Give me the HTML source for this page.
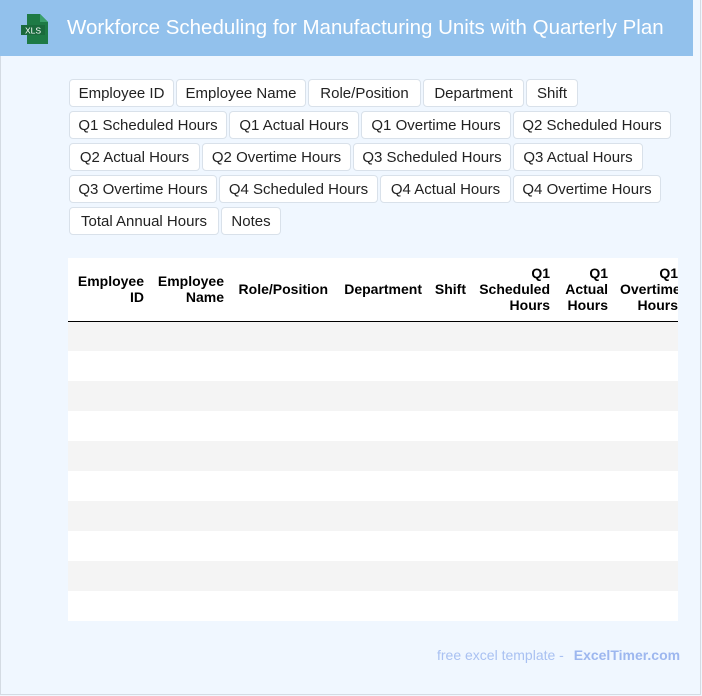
<!DOCTYPE html>
<html><head><meta charset="utf-8"><style>
*{box-sizing:border-box;margin:0;padding:0}
body{width:702px;height:696px;background:#f0f7ff;font-family:"Liberation Sans",Arial,sans-serif;position:relative;overflow:hidden}
.frame{position:absolute;left:0;top:0;width:701px;height:695px;border:1px solid #d4dbe3;border-top:none}
.hdr{position:absolute;left:0;top:0;width:693px;height:56px;background:#92c1ec}
.hdr h1{position:absolute;left:67px;top:16px;font-size:20.5px;font-weight:normal;color:#fff;white-space:nowrap}
.tags{position:absolute;left:69px;top:79px;width:620px}
.row{display:flex;gap:2px;margin-bottom:4px}
.tag{height:28px;background:#fff;border:1px solid #d9e1ea;border-radius:4px;font-size:15px;color:#222;display:flex;align-items:center;justify-content:center;white-space:nowrap;overflow:hidden}
th{font-size:14px;font-weight:bold;text-align:right;vertical-align:middle;padding:0 6px;height:63px;border-bottom:1px solid #000;line-height:16px;color:#000;overflow:hidden;white-space:nowrap}
td{height:30px}
tr.g td{background:#f4f4f4}
.wrap{position:absolute;left:68px;top:258px;width:610px;height:363px;overflow:hidden;background:#fff}
.wrap table{width:640px;border-collapse:collapse;table-layout:fixed}
.foot{position:absolute;left:437px;top:647px;font-size:14px;color:#a9c1f2;white-space:nowrap}
.foot b{color:#9db7ef;margin-left:6px}
</style></head><body>
<div class="frame"></div>
<div class="hdr">
<svg style="position:absolute;left:20px;top:13px" width="32" height="32" viewBox="0 0 32 32"><path d="M7 1h13l8 8v22H7z" fill="#1e7a45"/><path d="M20 1v8h8z" fill="#3aa06a"/><rect x="1" y="12" width="24" height="10" fill="#1a6a3c"/><text x="13" y="20.3" font-size="8.5" fill="#fff" text-anchor="middle" font-family="Liberation Sans">XLS</text></svg>
<h1>Workforce Scheduling for Manufacturing Units with Quarterly Plan</h1>
</div>
<div class="tags">
<div class="row"><div class="tag" style="width:105px">Employee ID</div><div class="tag" style="width:130px">Employee Name</div><div class="tag" style="width:113px">Role/Position</div><div class="tag" style="width:101px">Department</div><div class="tag" style="width:52px">Shift</div></div>
<div class="row"><div class="tag" style="width:158px">Q1 Scheduled Hours</div><div class="tag" style="width:130px">Q1 Actual Hours</div><div class="tag" style="width:150px">Q1 Overtime Hours</div><div class="tag" style="width:158px">Q2 Scheduled Hours</div></div>
<div class="row"><div class="tag" style="width:131px">Q2 Actual Hours</div><div class="tag" style="width:149px">Q2 Overtime Hours</div><div class="tag" style="width:158px">Q3 Scheduled Hours</div><div class="tag" style="width:130px">Q3 Actual Hours</div></div>
<div class="row"><div class="tag" style="width:148px">Q3 Overtime Hours</div><div class="tag" style="width:159px">Q4 Scheduled Hours</div><div class="tag" style="width:131px">Q4 Actual Hours</div><div class="tag" style="width:148px">Q4 Overtime Hours</div></div>
<div class="row"><div class="tag" style="width:150px">Total Annual Hours</div><div class="tag" style="width:60px">Notes</div></div>
</div>
<div class="wrap"><table>
<colgroup><col style="width:82px"><col style="width:80px"><col style="width:104px"><col style="width:94px"><col style="width:44px"><col style="width:84px"><col style="width:58px"><col style="width:94px"></colgroup>
<tr><th>Employee<br>ID</th><th>Employee<br>Name</th><th>Role/Position</th><th>Department</th><th>Shift</th><th>Q1<br>Scheduled<br>Hours</th><th>Q1<br>Actual<br>Hours</th><th style="padding-right:30px">Q1<br>Overtime<br>Hours</th></tr>
<tr class="g"><td colspan="8"></td></tr><tr><td colspan="8"></td></tr>
<tr class="g"><td colspan="8"></td></tr><tr><td colspan="8"></td></tr>
<tr class="g"><td colspan="8"></td></tr><tr><td colspan="8"></td></tr>
<tr class="g"><td colspan="8"></td></tr><tr><td colspan="8"></td></tr>
<tr class="g"><td colspan="8"></td></tr><tr><td colspan="8"></td></tr>
</table></div>
<div class="foot">free excel template - <b>ExcelTimer.com</b></div>
</body></html>
